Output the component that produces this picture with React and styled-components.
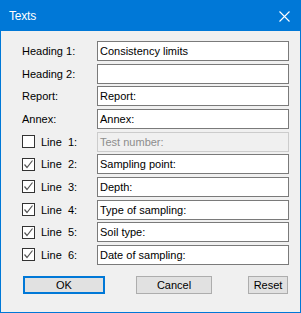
import React from "react";
import styled, { createGlobalStyle } from "styled-components";

const Global = createGlobalStyle`
  html, body { margin: 0; padding: 0; background: #f0f0f0; }
  * { box-sizing: border-box; }
`;

const Window = styled.div`
  width: 301px;
  height: 313px;
  border: 1px solid #0078d7;
  background: #f0f0f0;
  display: flex;
  flex-direction: column;
  font-family: "Liberation Sans", Arial, sans-serif;
  font-size: 11px;
  color: #000;
`;

const TitleBar = styled.div`
  height: 30px;
  background: #0078d7;
  color: #fff;
  display: flex;
  align-items: center;
  justify-content: space-between;
  padding: 0 10px 0 8px;
  font-size: 12px;
  letter-spacing: -0.2px;
`;

const Body = styled.div`
  padding: 10px 11px 0 21px;
  display: flex;
  flex-direction: column;
`;

const Form = styled.div`
  display: grid;
  grid-template-columns: 75px 192px;
  grid-auto-rows: 20px;
  row-gap: 2.67px;
  align-items: center;
`;

const Label = styled.span`
  display: flex;
  align-items: center;
  white-space: pre;
`;

const CheckLabel = styled.label`
  display: flex;
  align-items: center;
  gap: 6px;
  white-space: pre;
`;

const Box = styled.span`
  width: 13px;
  height: 13px;
  border: 1px solid #333;
  background: #fff;
  display: flex;
  align-items: center;
  justify-content: center;
`;

const Field = styled.div`
  height: 20px;
  border: 1px solid ${(p) => (p.$disabled ? "#cccccc" : "#7a7a7a")};
  background: ${(p) => (p.$disabled ? "#f0f0f0" : "#fff")};
  color: ${(p) => (p.$disabled ? "#8d8d8d" : "#000")};
  padding: 0 2px;
  display: flex;
  align-items: center;
  white-space: pre;
`;

const Buttons = styled.div`
  display: flex;
  margin-top: 11px;
  padding-left: 1px;
`;

const Button = styled.div`
  width: ${(p) => p.$w}px;
  height: 18px;
  margin-left: ${(p) => p.$ml || 0}px;
  background: #e1e1e1;
  border: ${(p) => (p.$def ? "2px solid #0078d7" : "1px solid #adadad")};
  display: flex;
  align-items: center;
  justify-content: center;
`;

const Check = ({ on }) => (
  <Box>
    {on && (
      <svg width="11" height="11" viewBox="0 0 11 11">
        <polyline points="1.5,5.5 4,8.5 9.5,1.5" fill="none" stroke="#555" strokeWidth="1.2" />
      </svg>
    )}
  </Box>
);

const rows = [
  { label: "Heading 1:", value: "Consistency limits" },
  { label: "Heading 2:", value: "" },
  { label: "Report:", value: "Report:" },
  { label: "Annex:", value: "Annex:" },
  { line: "Line  1:", on: false, value: "Test number:", disabled: true },
  { line: "Line  2:", on: true, value: "Sampling point:" },
  { line: "Line  3:", on: true, value: "Depth:" },
  { line: "Line  4:", on: true, value: "Type of sampling:" },
  { line: "Line  5:", on: true, value: "Soil type:" },
  { line: "Line  6:", on: true, value: "Date of sampling:" },
];

export default function App() {
  return (
    <>
      <Global />
      <Window>
        <TitleBar>
          <span>Texts</span>
          <svg width="11" height="11" viewBox="0 0 11 11">
            <path d="M0.5 0.5 L10.5 10.5 M10.5 0.5 L0.5 10.5" stroke="#fff" strokeWidth="1.1" />
          </svg>
        </TitleBar>
        <Body>
          <Form>
            {rows.map((r, i) => (
              <React.Fragment key={i}>
                {r.line ? (
                  <CheckLabel>
                    <Check on={r.on} />
                    {r.line}
                  </CheckLabel>
                ) : (
                  <Label>{r.label}</Label>
                )}
                <Field $disabled={r.disabled}>{r.value}</Field>
              </React.Fragment>
            ))}
          </Form>
          <Buttons>
            <Button $w={82} $def>OK</Button>
            <Button $w={76} $ml={31}>Cancel</Button>
            <Button $w={40} $ml={36}>Reset</Button>
          </Buttons>
        </Body>
      </Window>
    </>
  );
}
